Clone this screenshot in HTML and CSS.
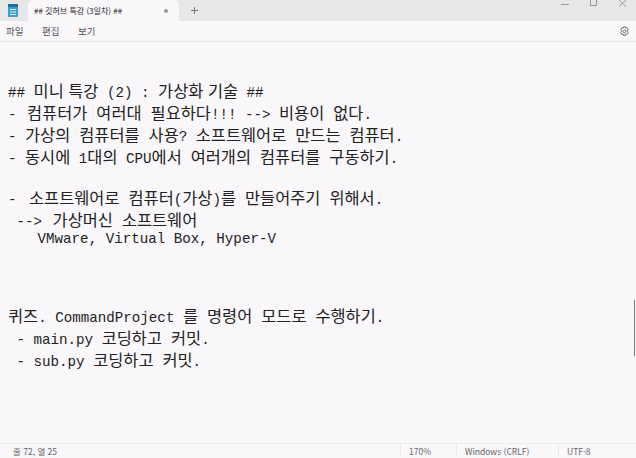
FILE: index.html
```html
<!DOCTYPE html>
<html lang="ko">
<head>
<meta charset="UTF-8">
<title>Notepad</title>
<link rel="stylesheet" href="styles.css">
</head>
<body>
<div class="tabbar">
    <svg class="app-icon" width="14" height="18" viewBox="0 0 14 18">
        <rect x="2" y="3" width="10" height="13" rx="1" fill="#3a9fd0"/>
        <rect x="2" y="3" width="10" height="3" fill="#1d6f9c"/>
        <path d="M4 8.500h6M4 11h6M4 13.500h6" stroke="#d6f1f5" stroke-width="1"/>
    </svg>
    <div class="tab">
        <span class="tab-title">## 깃허브 특강 (3일차) ##</span>
        <span class="tab-dot"></span>
    </div>
    <svg class="tab-plus" width="9" height="9" viewBox="0 0 9 9">
        <path d="M4.500 1v7M1 4.500h7" stroke="#777" stroke-width="1" fill="none"/>
    </svg>
    <div class="win-btns">
        <svg width="10" height="10" viewBox="0 0 10 10"><path d="M1 4.500h8" stroke="#999" fill="none"/></svg>
        <svg width="10" height="10" viewBox="0 0 10 10"><rect x="1.500" y="-.5" width="6" height="6" stroke="#999" fill="none"/></svg>
        <svg width="10" height="10" viewBox="0 0 10 10"><path d="M1 0l7 6.500M8 0l-7 6.500" stroke="#999" fill="none"/></svg>
    </div>
</div>
<div class="menubar">
    <span>파일</span>
    <span>편집</span>
    <span>보기</span>
    <svg class="gear" width="11" height="11" viewBox="0 0 12 12">
        <path d="M4.800 1h2.400l.4 1.400 1.400-.4 1.200 2-1 1v1.200l1 1-1.200 2-1.400-.4-.4 1.400H4.800l-.4-1.400-1.400.4-1.200-2 1-1V5l-1-1 1.200-2 1.400.4z" stroke="#555" stroke-width=".9" fill="none"/>
        <circle cx="6" cy="6" r="1.500" stroke="#555" stroke-width=".9" fill="none"/>
    </svg>
</div>
<div class="editor">
    <div class="line title">## <span class="ko">미니 특강</span> (2) : <span class="ko">가상화 기술</span> ##</div>
    <div class="line">- <span class="ko nudge-s">컴퓨터가 여러대 필요하다</span>!!! --&gt; <span class="ko">비용이 없다</span>.</div>
    <div class="line">- <span class="ko">가상의 컴퓨터를 사용</span>? <span class="ko">소프트웨어로 만드는 컴퓨터</span>.</div>
    <div class="line">- <span class="ko">동시에</span> 1<span class="ko">대의</span> CPU<span class="ko">에서 여러개의 컴퓨터를 구동하기</span>.</div>
    <div class="line plain"></div>
    <div class="line">- <span class="ko nudge">소프트웨어로 컴퓨터</span>(<span class="ko">가상</span>)<span class="ko">를 만들어주기 위해서</span>.</div>
    <div class="line"> --&gt; <span class="ko nudge-s">가상머신 소프트웨어</span></div>
    <div class="line plain">   <span class="nudge">VMware, Virtual Box, Hyper-V</span></div>
    <div class="line plain"></div>
    <div class="line plain"></div>
    <div class="line plain"></div>
    <div class="line"><span class="ko">퀴즈</span>. CommandProject <span class="ko">를 명령어 모드로 수행하기</span>.</div>
    <div class="line"> - main.py <span class="ko">코딩하고 커밋</span>.</div>
    <div class="line"> - sub.py <span class="ko">코딩하고 커밋</span>.</div>
    <div class="scroll-thumb"></div>
</div>
<div class="statusbar">
    <span class="pos">줄 72, 열 25</span>
    <span class="zoom">170%</span>
    <span class="eol">Windows (CRLF)</span>
    <span class="enc">UTF-8</span>
</div>
</body>
</html>
```

FILE: styles.css
```css
body { margin: 0; width: 636px; height: 458px; display: flex; flex-direction: column; overflow: hidden; background: #f9f7fa; font-family: "Noto Sans CJK KR", "Liberation Sans", sans-serif; color: #555; }
.tabbar { flex: none; height: 21px; background: #e8e7e8; display: flex; align-items: flex-end; position: relative; }
.app-icon { margin: 0 0 1px 6px; align-self: center; }
.tab { width: 151px; height: 21px; margin-left: 8px; box-sizing: border-box; padding: 0 11px 0 6px; background: #f9f7fa; border-radius: 6px 6px 0 0; display: flex; align-items: center; justify-content: space-between; }
.tab-title { font-size: 8px; color: #222; }
.tab-dot { width: 4px; height: 4px; border-radius: 50%; background: #999; }
.tab-plus { margin: 0 0 6px 11px; }
.win-btns { position: absolute; right: 0; top: 0; display: flex; gap: 19px; padding: 0 8px 0 0; }
.menubar { flex: none; height: 20px; display: flex; align-items: center; gap: 18.5px; padding: 0 6px; font-size: 9.5px; color: #555; border-bottom: 1px solid #e6e5e7; position: relative; }
.gear { position: absolute; right: 6px; top: 5px; }
.editor { flex: 1; min-height: 0; position: relative; padding: 37px 0 0 8px; font-family: "Liberation Mono", monospace; font-size: 14.2px; color: #222; }
.line { height: 22px; line-height: 22px; white-space: pre; }
.line.plain { height: 18.5px; line-height: 18.5px; }
.ko { font-family: "Noto Sans CJK KR", sans-serif; font-size: 16.4px; word-spacing: 4.4px; }
.title .ko { word-spacing: 0; }
.nudge { margin-left: 4px; }
.nudge-s { margin-left: 2px; }
.scroll-thumb { position: absolute; right: 1px; top: 258px; width: 1px; height: 56px; background: #777; }
.statusbar { flex: none; height: 14px; display: flex; align-items: center; font-size: 8.5px; color: #666; border-top: 1px solid #ebeaec; }
.pos { width: 387px; padding-left: 13px; }
.zoom { width: 47px; padding-left: 8px; border-left: 1px solid #e6e5e7; }
.eol { width: 93px; padding-left: 8px; border-left: 1px solid #e6e5e7; }
.enc { padding-left: 8px; border-left: 1px solid #e6e5e7; }
```
